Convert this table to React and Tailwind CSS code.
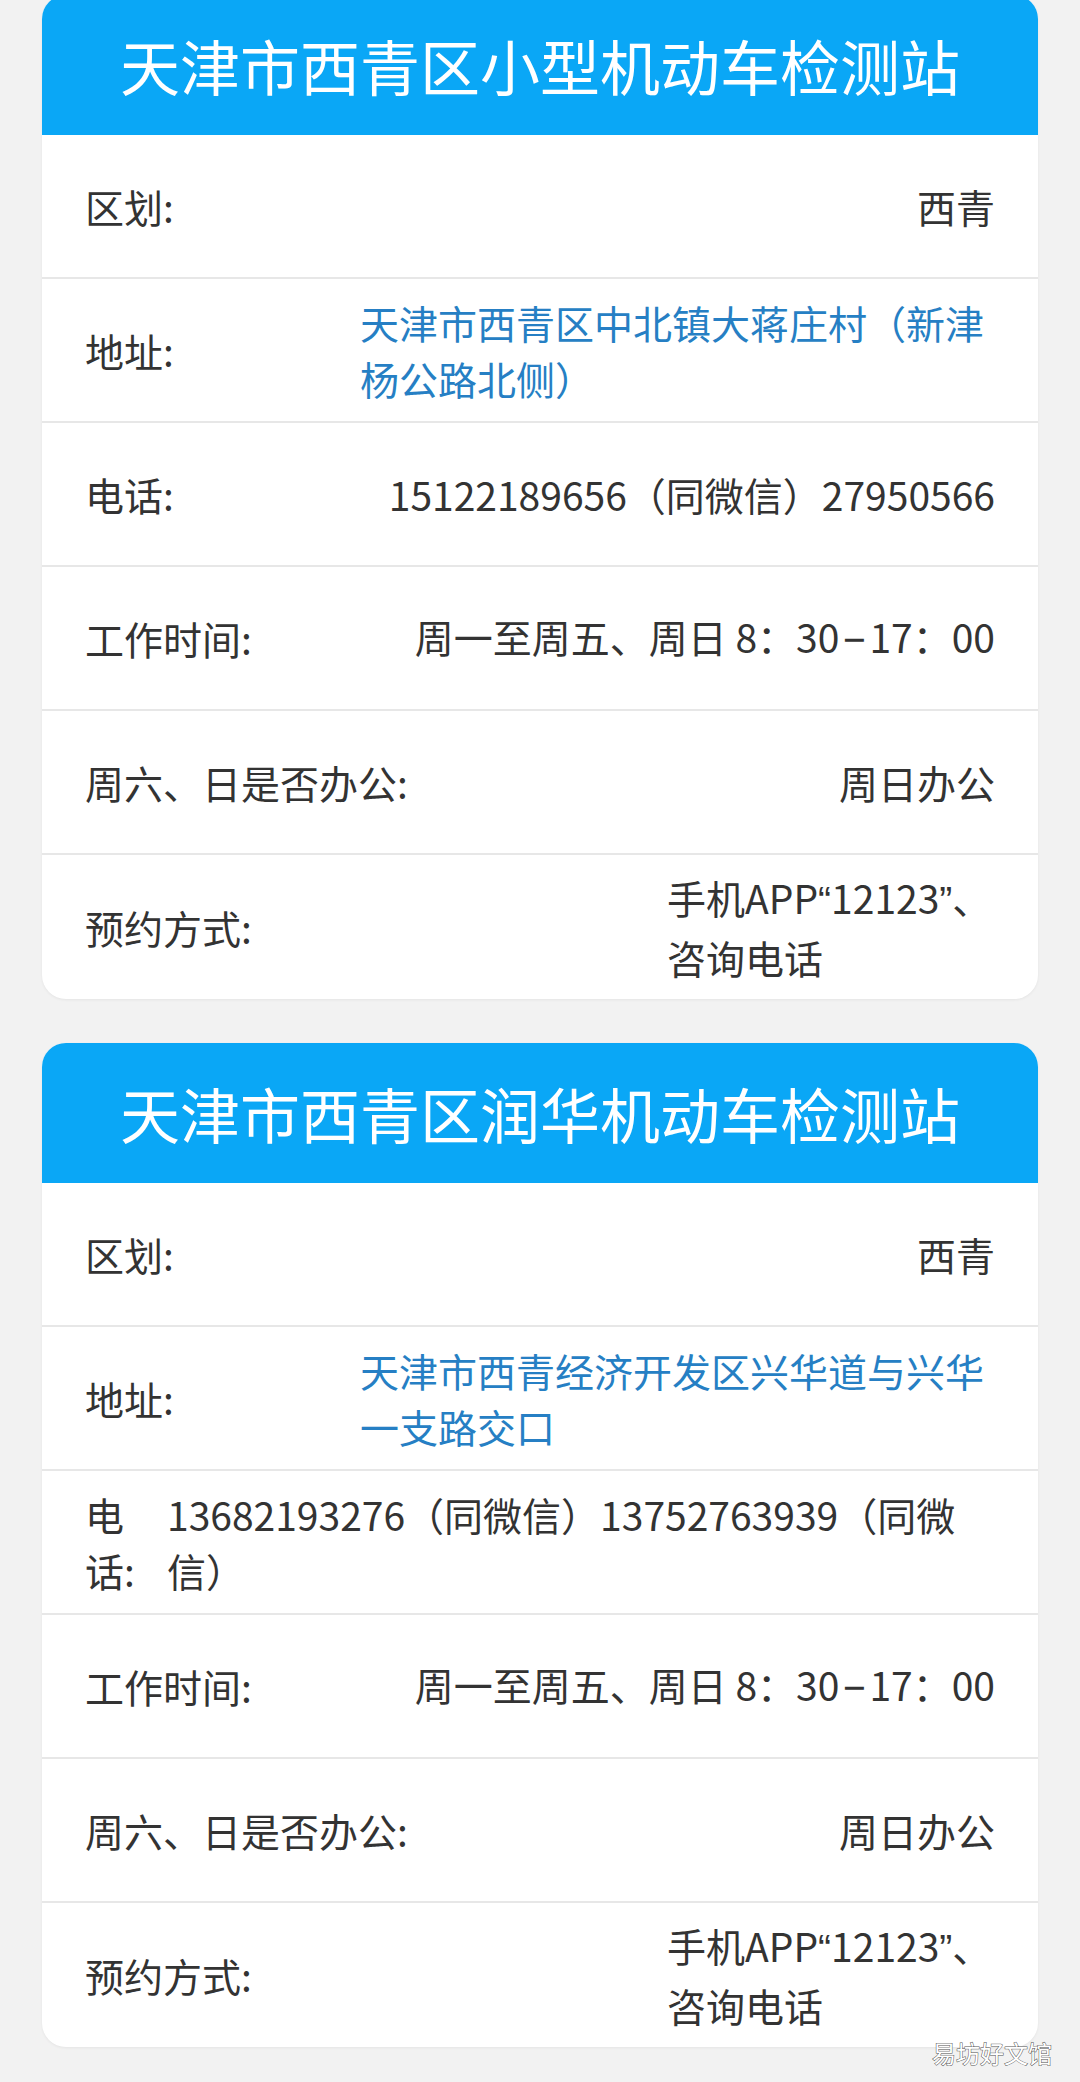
import React from "react";

const FONT = { fontFamily: '"Noto Sans CJK SC", "Noto Sans", sans-serif' };

function Q({ children }) {
  // narrow western quotes, as in the screenshot
  return <span className="font-['Liberation_Sans',sans-serif]">{children}</span>;
}

const stations = [
  {
    name: "天津市西青区小型机动车检测站",
    address: "天津市西青区中北镇大蒋庄村（新津杨公路北侧）",
    phone: "15122189656（同微信）27950566",
    phoneWide: false,
  },
  {
    name: "天津市西青区润华机动车检测站",
    address: "天津市西青经济开发区兴华道与兴华一支路交口",
    phone: "13682193276（同微信）13752763939（同微信）",
    phoneWide: true,
  },
];

function Row({ children, last }) {
  return (
    <div
      className={`h-[144px] flex items-center px-[43px] ${
        last ? "" : "border-b-2 border-[#e7e7e7]"
      }`}
    >
      {children}
    </div>
  );
}

function Label({ children }) {
  return <div className="shrink-0 text-[#333333]">{children}</div>;
}

function Card({ s, first }) {
  return (
    <div
      className={`mx-[42px] bg-white rounded-[24px] overflow-hidden shadow-[0_1px_3px_rgba(0,0,0,0.06)] ${
        first ? "-mt-[5px]" : "mt-[44px]"
      }`}
    >
      <div className="h-[140px] bg-[#0aa7f6] flex items-center justify-center">
        <h1 className="text-white text-[60px] leading-none font-normal">{s.name}</h1>
      </div>
      <div className="text-[39px] leading-[56px] text-[#333333]">
        <Row>
          <Label>区划:</Label>
          <div className="ml-auto">西青</div>
        </Row>
        <Row>
          <Label>地址:</Label>
          <div className="ml-auto w-[635px] text-left text-[#267fc4]">{s.address}</div>
        </Row>
        <Row>
          {s.phoneWide ? (
            <>
              <div className="shrink-0 w-[50px]">电话:</div>
              <div className="ml-[32px] w-[805px] text-left">{s.phone}</div>
            </>
          ) : (
            <>
              <Label>电话:</Label>
              <div className="ml-auto">{s.phone}</div>
            </>
          )}
        </Row>
        <Row>
          <Label>工作时间:</Label>
          <div className="ml-auto">
            周一至周五、周日 8：30
            <span className="inline-block w-[30px] text-center font-['Liberation_Sans',sans-serif]">−</span>
            17：00
          </div>
        </Row>
        <Row>
          <Label>周六、日是否办公:</Label>
          <div className="ml-auto">周日办公</div>
        </Row>
        <Row last>
          <Label>预约方式:</Label>
          <div className="ml-auto w-[328px] text-left">
            手机APP<Q>“</Q>12123<Q>”</Q>、咨询电话
          </div>
        </Row>
      </div>
    </div>
  );
}

export default function App() {
  return (
    <div lang="zh-CN" style={FONT} className="relative min-h-[2082px] bg-[#f2f2f2] overflow-hidden">
      {stations.map((s, i) => (
        <Card key={s.name} s={s} first={i === 0} />
      ))}
      <div className="absolute right-[28px] bottom-[17px] text-[24px] leading-none text-white [-webkit-text-stroke:1px_#555555] [paint-order:stroke_fill]">
        易坊好文馆
      </div>
    </div>
  );
}
